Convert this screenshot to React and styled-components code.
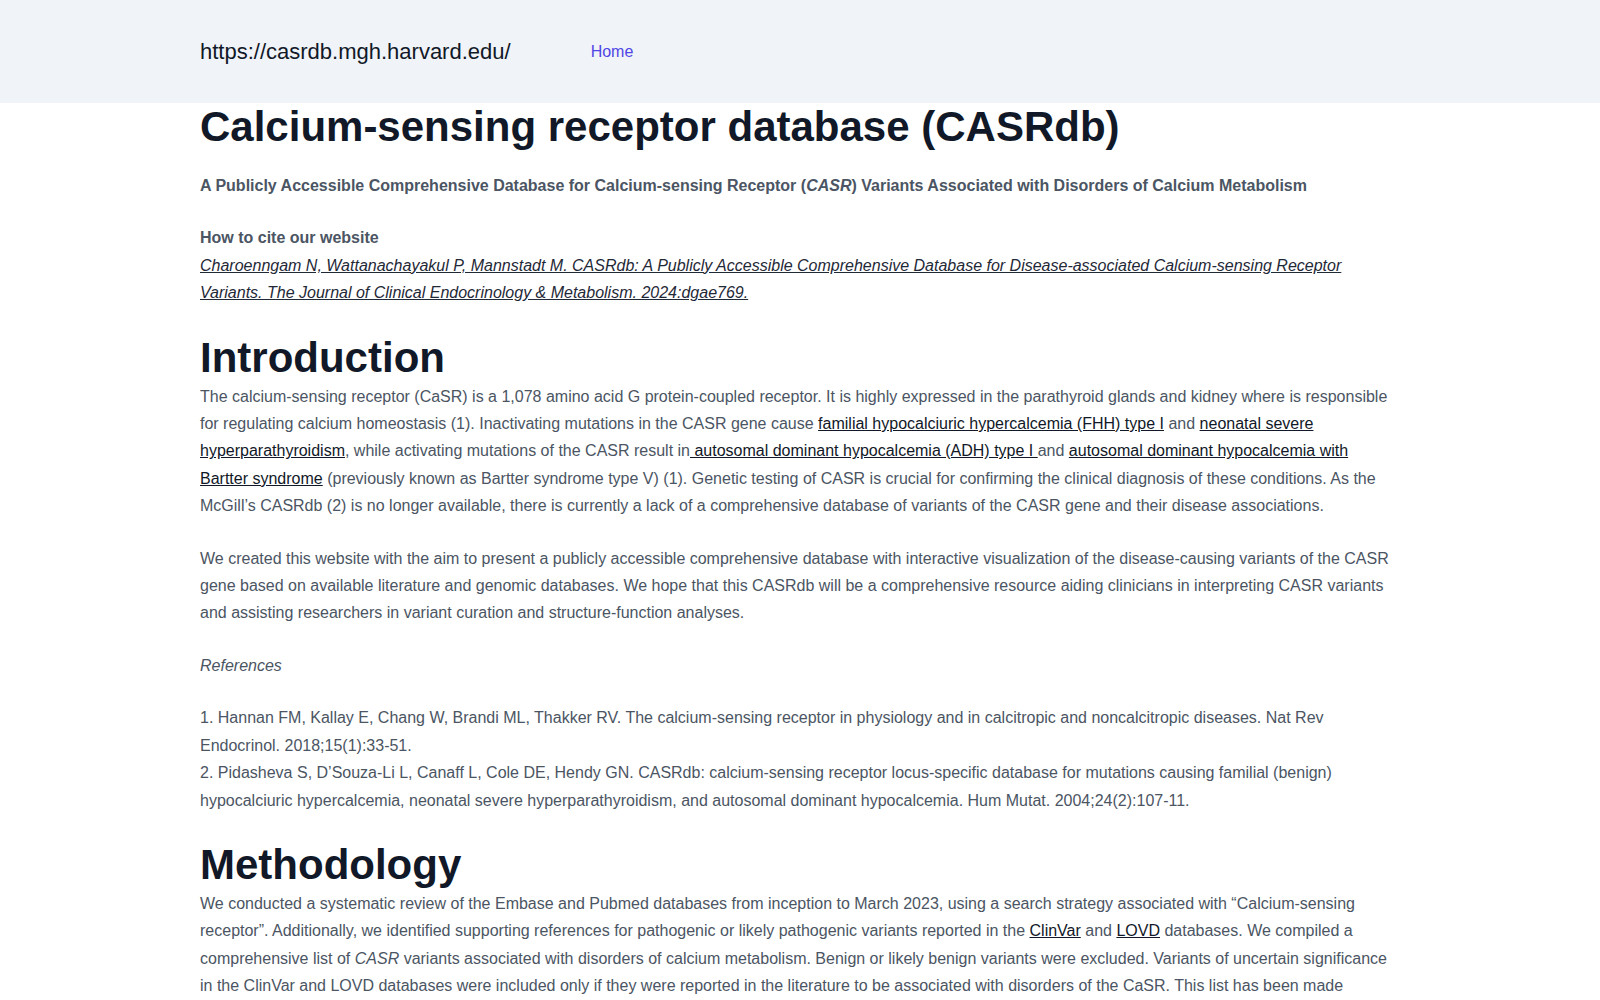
import React from 'react';
import styled, { createGlobalStyle } from 'styled-components';

/*
Page-wide defaults: no body margin, Arial-metric sans font.
*/
const GlobalStyle = createGlobalStyle`
    body {
        margin: 0;
        background: #ffffff;
        font-family: 'Liberation Sans', Arial, Helvetica, sans-serif;
        color: #4b5563;
    }
`

const Header = styled.header`
    height: 103px;
    background-color: #f0f3f8;
`

const HeaderInner = styled.div`
    max-width: 1200px;
    height: 100%;
    margin: 0 auto;
    display: flex;
    align-items: center;
    gap: 80px;
`

const SiteUrl = styled.span`
    font-size: 22px;
    color: #111827;
`

const NavLink = styled.a`
    font-size: 16px;
    color: #4f46e5;
    text-decoration: none;
`

const Main = styled.main`
    max-width: 1200px;
    margin: 0 auto;
    padding-bottom: 40px;
`

const Title = styled.h1`
    margin: 3px 0 24px;
    font-size: 42px;
    line-height: 42px;
    font-weight: 700;
    color: #111827;
`

const SectionTitle = styled.h2`
    margin: 25px 0 0;
    font-size: 42px;
    line-height: 51px;
    font-weight: 700;
    color: #111827;
`

const Para = styled.p`
    margin: 0 0 ${props => props.$gap ?? 25}px;
    font-size: 16px;
    line-height: 27.4px;
    font-weight: ${props => props.$bold ? 700 : 400};
    font-style: ${props => props.$italic ? 'italic' : 'normal'};
`

const Ref = styled.a`
    color: #111827;
    text-decoration: underline;
`

const Citation = styled.a`
    font-style: italic;
    color: #1f2937;
    text-decoration: underline;
`

/*
Landing page of the database with introduction and methods text.
*/
export default function App() {
    return (
        <>
            <GlobalStyle />
            <Header>
                <HeaderInner>
                    <SiteUrl>https://casrdb.mgh.harvard.edu/</SiteUrl>
                    <NavLink href="#">Home</NavLink>
                </HeaderInner>
            </Header>
            <Main>
                <Title>Calcium-sensing receptor database (CASRdb)</Title>
                <Para $bold>
                    A Publicly Accessible Comprehensive Database for Calcium-sensing Receptor (<i>CASR</i>) Variants Associated with Disorders of Calcium Metabolism
                </Para>
                <Para $bold $gap={0}>How to cite our website</Para>
                <Para $gap={0}>
                    <Citation href="#">
                        Charoenngam N, Wattanachayakul P, Mannstadt M. CASRdb: A Publicly Accessible Comprehensive Database for Disease-associated Calcium-sensing Receptor Variants. The Journal of Clinical Endocrinology &amp; Metabolism. 2024:dgae769.
                    </Citation>
                </Para>

                <SectionTitle>Introduction</SectionTitle>
                <Para>
                    The calcium-sensing receptor (CaSR) is a 1,078 amino acid G protein-coupled receptor. It is highly expressed in the parathyroid glands and kidney where is responsible for regulating calcium homeostasis (1). Inactivating mutations in the CASR gene cause <Ref href="#">familial hypocalciuric hypercalcemia (FHH) type I</Ref> and <Ref href="#">neonatal severe hyperparathyroidism</Ref>, while activating mutations of the CASR result in<Ref href="#"> autosomal dominant hypocalcemia (ADH) type I </Ref>and <Ref href="#">autosomal dominant hypocalcemia with Bartter syndrome</Ref> (previously known as Bartter syndrome type V) (1). Genetic testing of CASR is crucial for confirming the clinical diagnosis of these conditions. As the McGill’s CASRdb (2) is no longer available, there is currently a lack of a comprehensive database of variants of the CASR gene and their disease associations.
                </Para>
                <Para>
                    We created this website with the aim to present a publicly accessible comprehensive database with interactive visualization of the disease-causing variants of the CASR gene based on available literature and genomic databases. We hope that this CASRdb will be a comprehensive resource aiding clinicians in interpreting CASR variants and assisting researchers in variant curation and structure-function analyses.
                </Para>
                <Para $italic>References</Para>
                <Para $gap={0}>
                    1. Hannan FM, Kallay E, Chang W, Brandi ML, Thakker RV. The calcium-sensing receptor in physiology and in calcitropic and noncalcitropic diseases. Nat Rev Endocrinol. 2018;15(1):33-51.
                </Para>
                <Para $gap={0}>
                    2. Pidasheva S, D’Souza-Li L, Canaff L, Cole DE, Hendy GN. CASRdb: calcium-sensing receptor locus-specific database for mutations causing familial (benign) hypocalciuric hypercalcemia, neonatal severe hyperparathyroidism, and autosomal dominant hypocalcemia. Hum Mutat. 2004;24(2):107-11.
                </Para>

                <SectionTitle>Methodology</SectionTitle>
                <Para>
                    We conducted a systematic review of the Embase and Pubmed databases from inception to March 2023, using a search strategy associated with “Calcium-sensing receptor”. Additionally, we identified supporting references for pathogenic or likely pathogenic variants reported in the <Ref href="#">ClinVar</Ref> and <Ref href="#">LOVD</Ref> databases. We compiled a comprehensive list of <i>CASR</i> variants associated with disorders of calcium metabolism. Benign or likely benign variants were excluded. Variants of uncertain significance in the ClinVar and LOVD databases were included only if they were reported in the literature to be associated with disorders of the CaSR. This list has been made publicly available on this website and will be updated periodically.
                </Para>
            </Main>
        </>
    );
}
